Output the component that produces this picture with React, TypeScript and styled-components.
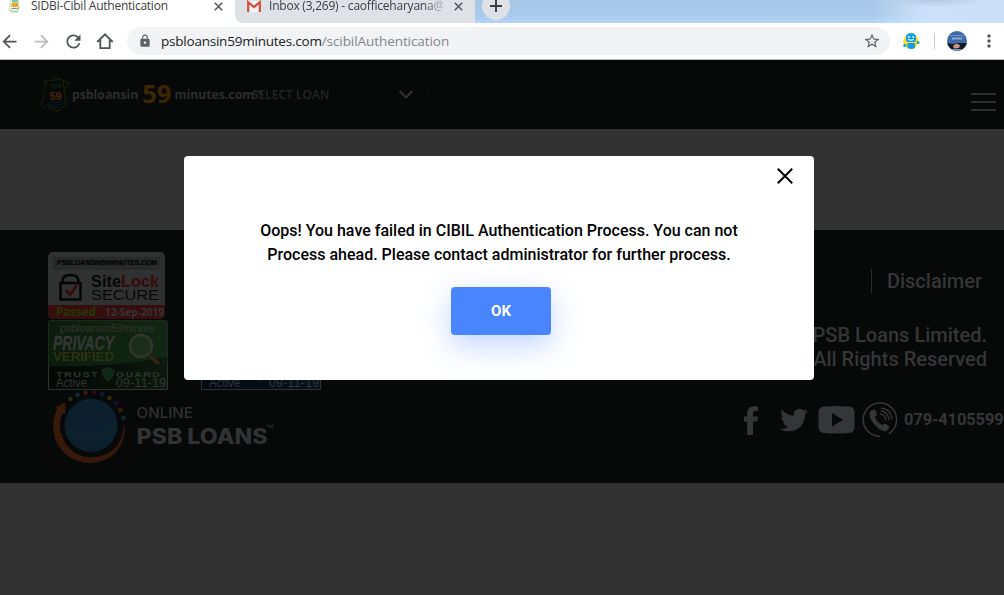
import React from "react";
import styled, { createGlobalStyle } from "styled-components";
import { MdArrowBack, MdArrowForward, MdRefresh, MdStarBorder, MdLock, MdMoreVert } from "react-icons/md";
import { FaTwitter } from "react-icons/fa";

const GlobalStyle = createGlobalStyle`
  * { box-sizing: border-box; }
  html, body { margin: 0; padding: 0; overflow: hidden; }
  svg { display: block; flex: none; }
`;

const Window = styled.div`
  position: relative;
  width: 1004px;
  height: 595px;
  overflow: hidden;
  background: #323232;
  font-family: Roboto, "Liberation Sans", sans-serif;
`;

/* ---------- browser chrome ---------- */

const TabStrip = styled.div`
  display: flex;
  height: 23px;
  background:
    radial-gradient(ellipse 50px 7px at 935px 0, rgba(176, 196, 222, 0.9) 0%, transparent 100%),
    linear-gradient(90deg, transparent 870px, rgba(210, 229, 252, 0.85) 925px, #cbdff6 100%),
    linear-gradient(#a6c7e6 0%, #a9c9e9 60%, #b2d4fb 100%);
`;

const Tab = styled.div<{ $active?: boolean; $width: number }>`
  display: flex;
  width: ${(p) => p.$width}px;
  height: 23px;
  padding-left: ${(p) => (p.$active ? 7 : 12)}px;
  background: ${(p) => (p.$active ? "#fff" : "#dee1e6")};
  border-radius: ${(p) => (p.$active ? "0" : "0 0 0 8px")};
`;

const TabsBase = styled.div`
  display: flex;
  width: 475px;
  height: 23px;
  background: #fff;
`;

const TabTitle = styled.div<{ $width: number; $faded?: boolean; $spacing: number }>`
  width: ${(p) => p.$width}px;
  margin-left: ${(p) => (p.$faded ? 8 : 9)}px;
  height: 16px;
  margin-top: -2px;
  line-height: 16px;
  font-family: "Open Sans", "Noto Sans", sans-serif;
  font-size: 12px;
  letter-spacing: ${(p) => p.$spacing}px;
  white-space: nowrap;
  overflow: hidden;
  color: #3c4043;
  ${(p) => p.$faded && "mask-image: linear-gradient(90deg, #000 88%, rgba(0,0,0,.25));"}
`;

const NewTab = styled.div`
  width: 28px;
  height: 28px;
  margin: -8px 0 0 7px;
  border-radius: 50%;
  background: #dee1e6;
  display: flex;
  align-items: center;
  justify-content: center;
`;

const Toolbar = styled.div`
  display: flex;
  align-items: center;
  height: 37px;
  padding-left: 0;
  background: #fff;
  border-bottom: 1px solid #b4b4b6;
`;

const NavButtons = styled.div`
  display: flex;
  margin-left: -7px;
`;

const NavButton = styled.div<{ $dim?: boolean }>`
  display: flex;
  align-items: center;
  justify-content: center;
  width: 32px;
  color: ${(p) => (p.$dim ? "#babcbe" : "#505357")};
`;

const AddressBar = styled.div`
  display: flex;
  align-items: center;
  width: 763px;
  height: 28px;
  margin-left: 6px;
  padding: 0 9px 0 11px;
  border-radius: 14px;
  background: #f1f3f4;
  color: #5f6368;
`;

const Url = styled.div`
  flex: 1;
  margin-left: 9px;
  font-family: "Open Sans", "Noto Sans", sans-serif;
  font-size: 13.5px;
  letter-spacing: -0.22px;
  white-space: nowrap;
  color: #202124;
  span { color: #80868b; letter-spacing: -0.07px; }
`;

const Extensions = styled.div`
  display: flex;
  align-items: center;
  margin-left: 12px;
  color: #505357;
`;

const Divider = styled.div`
  width: 1px;
  height: 16px;
  margin: 0 12px 0 14px;
  background: #c8cacd;
`;

const MoreMenu = styled.div`
  margin-left: 12px;
`;

/* ---------- page ---------- */

const Header = styled.header`
  display: flex;
  align-items: center;
  height: 69px;
  padding: 0 8px 0 40px;
  background: #060908;
`;

const Brand = styled.div`
  display: flex;
  align-items: center;
  width: 182px;
  height: 26px;
  padding-left: 2px;
  white-space: nowrap;
  font-family: "Open Sans", "Noto Sans", sans-serif;
  font-weight: 700;
  font-size: 12.3px;
  line-height: 26px;
  letter-spacing: -0.03px;
  color: #2c2d2e;
`;

const BrandNumber = styled.span`
  margin: -3px 3px 0 4px;
  font-size: 25.5px;
  line-height: 26px;
  letter-spacing: 0;
  color: #3f2603;
`;

const Trademark = styled.span`
  align-self: flex-start;
  margin-top: 6px;
  font-size: 11px;
  line-height: 12px;
`;

const LoanSelect = styled.div`
  display: flex;
  align-items: center;
  justify-content: space-between;
  width: 177px;
  height: 16px;
  padding-right: 15px;
  border-right: 1px solid #0b0e0d;
  white-space: nowrap;
  font-family: "Open Sans", "Noto Sans", sans-serif;
  font-weight: 600;
  font-size: 12px;
  color: #242526;
`;

const MenuButton = styled.div`
  display: flex;
  flex-direction: column;
  gap: 6px;
  width: 25px;
  margin: 15px 0 0 auto;
  i { height: 2px; background: #2e302f; }
`;

const Spacer = styled.div`
  height: 101px;
`;

const Footer = styled.footer`
  display: flex;
  justify-content: space-between;
  height: 253px;
  background: #060908;
`;

const FooterLeft = styled.div`
  padding: 22px 0 0 48px;
`;

const BadgeRow = styled.div`
  display: flex;
  gap: 33px;
  margin-top: 1px;
`;

const OnlineLogo = styled.div`
  display: flex;
  margin: 0 0 0 3px;
`;

const FooterRight = styled.div`
  display: flex;
  flex-direction: column;
  align-items: flex-end;
  width: 300px;
  font-size: 20px;
  font-weight: 500;
  line-height: 24px;
  color: #353637;
`;

const Disclaimer = styled.div`
  margin: 39px 22px 0 0;
  padding-left: 15px;
  border-left: 1px solid #2a2c2c;
`;

const Copyright = styled.div`
  margin: 30px 17px 0 0;
  text-align: right;
`;

const Contact = styled.div`
  display: flex;
  align-items: center;
  width: 264px;
  height: 36px;
  margin-top: 31px;
  overflow: hidden;
  font-size: 16.5px;
  font-weight: 700;
  white-space: nowrap;
  color: #353637;
`;

const Phone = styled.span`
  margin-left: 6px;
  letter-spacing: -0.15px;
`;

/* ---------- dialog ---------- */

const Dialog = styled.div`
  position: absolute;
  left: 184px;
  top: 156px;
  width: 630px;
  height: 224px;
  display: flex;
  flex-direction: column;
  align-items: center;
  background: #fff;
  border-radius: 4px;
`;

const CloseButton = styled.div`
  align-self: flex-end;
  margin: 12px 21px 0 0;
`;

const Message = styled.p`
  width: 500px;
  margin: 35px 0 0;
  text-align: center;
  font-size: 16px;
  font-weight: 500;
  line-height: 24px;
  color: #000;
`;

const OkButton = styled.button`
  width: 100px;
  height: 48px;
  margin: 20px 0 0 4px;
  padding: 0 0 1px;
  border: 0;
  border-radius: 4px;
  background: #4885ff;
  box-shadow: 0 10px 30px rgba(72, 133, 255, 0.35);
  font-family: Roboto, sans-serif;
  font-size: 15px;
  font-weight: 700;
  color: #fff;
`;

const CloseX = ({ size, color, width }: { size: number; color: string; width: number }) => (
  <svg width={size} height={size} viewBox={`0 0 ${size} ${size}`} stroke={color} strokeWidth={width}>
    <path d={`M.8 .8L${size - 0.8} ${size - 0.8}M${size - 0.8} .8L.8 ${size - 0.8}`} />
  </svg>
);

const TabX = styled.div`
  margin: 1.5px 0 0 auto;
  padding-right: 12px;
`;

const SiteIcon = () => (
  <svg width="15" height="15" viewBox="0 0 15 15">
    <path d="M4 -1l8 1.500L11 10l-5 3-4.500-3 1-2z" fill="#f3f8ea" stroke="#b9d8a2" strokeWidth=".8" />
    <path d="M3 10l7 2.500 2.500-6" fill="none" stroke="#8cc46c" strokeWidth=".8" />
    <rect x="5" y="0" width="6" height="2.500" fill="#7fc8a0" />
    <rect x="4.500" y="3" width="6.500" height="4" fill="#f1a52b" />
    <path d="M4.500 8.500h6" stroke="#6a91cc" />
  </svg>
);

const GmailIcon = () => (
  <svg width="14" height="14" viewBox="0 0 14 14">
    <rect x="1" y="1" width="12" height="11" fill="#f3f3f3" />
    <path d="M1.200 12V2.200L7 7l5.800-4.800V12" fill="none" stroke="#d54b3d" strokeWidth="2.200" />
  </svg>
);

const HomeIcon = () => (
  <svg width="18" height="18" viewBox="0 0 18 18" fill="none" stroke="currentColor" strokeWidth="1.800">
    <path d="M1.300 10L9 2.300 16.700 10M4.300 8v8.100h9.400V8" />
  </svg>
);

const RobotIcon = () => (
  <svg width="18" height="18" viewBox="0 0 18 18">
    <circle cx="9" cy="9.500" r="7.600" fill="#ffe11a" />
    <rect x="6" y="1" width="6" height="3" rx="1" fill="#3cc66a" />
    <rect x="4" y="2" width="10" height="8" rx="2.500" fill="#119cf2" />
    <path d="M5.500 11h7.500v5q-3.750 2-7.500 0z" fill="#119cf2" />
    <circle cx="2.800" cy="13.300" r="1.600" fill="#119cf2" />
    <circle cx="16" cy="10.500" r="1.500" fill="#119cf2" />
    <path d="M6 5h1.800M10.400 5h1.800M6.300 7.200q2.700 2 5.400 0" stroke="#fff" strokeWidth="1.300" fill="none" />
  </svg>
);

const Avatar = () => (
  <svg width="20" height="20" viewBox="0 0 20 20">
    <defs><clipPath id="avatar"><circle cx="10" cy="10" r="10" /></clipPath></defs>
    <g clipPath="url(#avatar)">
      <rect width="20" height="20" fill="#3f6ba8" />
      <path d="M3 4.500h14" stroke="#7fa0cb" strokeWidth="1.200" strokeDasharray="2 .6" />
      <path d="M5 7.500h10" stroke="#a9bfd9" strokeWidth="2" strokeDasharray="1.500 .6" />
      <path d="M0 12l6 1 4-1 10 0v8H0z" fill="#161a25" />
      <path d="M6 15l3-2.500 4 1.500-1 3-5 .5z" fill="#c99882" />
      <path d="M5 18h9v2H5z" fill="#6aa2d8" />
    </g>
  </svg>
);

const BrandMark = () => (
  <svg width="30" height="36" viewBox="0 0 30 36">
    <g fill="none" stroke="#14230d">
      <path d="M11 4l3-3.500 15 5-4 6M4 4l18-1.500M5 31L1 27l4-9M4 4l2 6M8 30l10 4 5-4M26 28l-4 3M23 3l3 25M6 28l12 2.500" />
      <path d="M2 11l2 2-3 2 3 2M27 18l-2 3 3 2-3 2" strokeDasharray="1 1" />
    </g>
    <path d="M8 24h15v4H9z" fill="#080b1c" />
    <text x="16" y="11" fill="#08240f" fontSize="5.500" fontWeight="700" textAnchor="middle" fontFamily="Open Sans">PSB</text>
    <text x="15.500" y="23" fill="#482607" fontSize="11" fontWeight="700" textAnchor="middle" fontFamily="Liberation Sans">59</text>
  </svg>
);

const SiteLockBadge = () => (
  <svg width="117" height="67" viewBox="0 0 117 67" fontFamily="Liberation Sans">
    <defs><clipPath id="lockBadge"><rect width="117" height="67" rx="5" /></clipPath></defs>
    <g clipPath="url(#lockBadge)">
      <rect width="117" height="67" fill="#303131" />
      <rect x="5" y="5" width="107" height="13" fill="#282929" />
      <rect y="53" width="117" height="14" fill="#350e0d" />
    </g>
    <text x="9" y="13.300" fontSize="6.500" fontWeight="700" fill="#040404" stroke="#040404" strokeWidth=".2" textLength="100" lengthAdjust="spacingAndGlyphs">PSBLOANSIN59MINUTES.COM</text>
    <path d="M14.500 31v-2q0-6 8-6t8 6v2" fill="none" stroke="#050505" strokeWidth="2.500" />
    <rect x="12.500" y="31" width="20" height="16.500" fill="#303131" stroke="#050505" strokeWidth="2.500" />
    <path d="M18 38l4 5 7-10" fill="none" stroke="#3b0b0b" strokeWidth="2.800" />
    <text x="43" y="34.500" fontSize="17" fontWeight="700" fill="#060606" textLength="30" lengthAdjust="spacingAndGlyphs">Site</text>
    <text x="73" y="34.500" fontSize="17" fontWeight="700" fill="#350b0b" textLength="38" lengthAdjust="spacingAndGlyphs">Lock</text>
    <text x="43" y="48" fontSize="15" fill="#080808" textLength="68" lengthAdjust="spacingAndGlyphs">SECURE</text>
    <text x="8" y="64" fontSize="11.500" fontWeight="700" fill="#29350b" textLength="40" fontFamily="Open Sans" lengthAdjust="spacingAndGlyphs">Passed</text>
    <text x="57" y="64" fontSize="10.500" fontWeight="700" fill="#393433" textLength="59" fontFamily="Open Sans" lengthAdjust="spacingAndGlyphs">12-Sep-2019</text>
  </svg>
);

const TrustBadge = ({ blue }: { blue?: boolean }) => {
  const id = blue ? "trustBlue" : "trustGreen";
  return (
    <svg width="120" height="70" viewBox="0 0 120 70" fontFamily="Liberation Sans">
      <defs>
        <linearGradient id={id}>
          <stop offset="0" stopColor={blue ? "#080e18" : "#0a1c0b"} />
          <stop offset="1" stopColor={blue ? "#09203a" : "#122714"} />
        </linearGradient>
        <linearGradient id={`${id}Base`}>
          <stop offset=".2" stopColor={blue ? "#040a13" : "#050906"} />
          <stop offset="1" stopColor={blue ? "#06131f" : "#0c1a0e"} />
        </linearGradient>
      </defs>
      <rect x=".5" y=".5" width="119" height="69" rx="2" fill={`url(#${id})`} stroke="#1d291f" />
      <path d="M1 46q60 2 118-9v32H1z" fill={`url(#${id}Base)`} />
      <path d="M.5 46v23.500h119V46" fill="none" stroke="#2f3233" />
      <text x="12" y="12" fontSize="11" fill="#30352f" textLength="95">psbloansin59minute</text>
      <text x="5" y="29.500" fontSize="20" fontWeight="700" fontStyle="italic" fill="#343634" stroke="#343634" strokeWidth=".5" textLength="61" lengthAdjust="spacingAndGlyphs">PRIVACY</text>
      <text x="5" y="41" fontSize="12.500" fontWeight="700" fill="#2c3315" textLength="61" lengthAdjust="spacingAndGlyphs">VERIFIED</text>
      <circle cx="93" cy="26" r="11" fill="#1a2e1a" stroke="#303530" strokeWidth="2.500" />
      <path d="M102 36l9 8" stroke="#3a2411" strokeWidth="3.500" />
      <text x="8" y="57" fontSize="8" fontWeight="700" letterSpacing="1" fill="#2d332e" textLength="43" lengthAdjust="spacingAndGlyphs">TRUST</text>
      <path d="M54 50l6-2 6 2q0 7-6 11-6-4-6-11z" fill="#0a2815" stroke="#222b25" />
      <text x="68" y="57" fontSize="8" fontWeight="700" letterSpacing="1" fill="#2d332e" textLength="45" lengthAdjust="spacingAndGlyphs">GUARD</text>
      <text x="8" y="67" fontSize="12" fill="#323634" textLength="31" lengthAdjust="spacingAndGlyphs">Active</text>
      <text x="68" y="67" fontSize="12" fill="#323634" textLength="50">09-11-19</text>
    </svg>
  );
};

const PsbLogo = () => (
  <svg width="226" height="76" viewBox="0 0 226 76">
    <defs>
      <linearGradient id="globe" x2="0" y2="1"><stop stopColor="#0c2231" /><stop offset="1" stopColor="#0c1e2b" /></linearGradient>
    </defs>
    <circle cx="40" cy="35.500" r="26.500" fill="url(#globe)" />
    <path d="M14 34q17 10 52-4-3-14-14-19Q34 3 20 18q-6 7-6 16z" fill="#0b1b28" opacity=".5" />
    <path d="M18 20q14 20 46 13" fill="none" stroke="#0d2536" />
    <path d="M3.500 18L14.500 12V24.500l-3-1Q6 36 12 48.500 21 67 40 67.500 70 66 73 36h1.300Q73 70 40 73 15 73 4.500 50-1 35 6 19z" fill="#37190b" />
    <circle cx="19.500" cy="9" r="2.300" fill="#27300f" /><circle cx="26.500" cy="5" r="2.300" fill="#0b2b38" />
    <circle cx="34.500" cy="2.700" r="2.300" fill="#391a0c" /><circle cx="43" cy="2.500" r="2.300" fill="#2b0918" />
    <circle cx="51" cy="4.200" r="2.300" fill="#0c1d34" /><circle cx="58.500" cy="8" r="2.300" fill="#382908" />
    <circle cx="65" cy="13.300" r="2.300" fill="#1d0d2a" /><circle cx="69.500" cy="20" r="2.300" fill="#391a0c" />
    <circle cx="72.500" cy="28" r="2.300" fill="#0b2933" />
    <text x="85.500" y="28" fontFamily="Inter" fontWeight="500" fontSize="15" fill="#2f3031" textLength="56.500" lengthAdjust="spacingAndGlyphs">ONLINE</text>
    <text x="85.500" y="54" fontFamily="Inter" fontWeight="800" fontSize="21.500" fill="#313233" textLength="131" lengthAdjust="spacingAndGlyphs">PSB LOANS</text>
    <text x="215" y="41" fontFamily="Open Sans" fontSize="9" fill="#2e2f30" textLength="8" lengthAdjust="spacingAndGlyphs">™</text>
  </svg>
);

const FacebookSvg = styled.svg`
  margin-left: 4px;
`;
const TwitterIcon = styled(FaTwitter)`
  width: 28px;
  height: 28px;
  margin-left: 22px;
`;
const YoutubeIcon = () => (
  <svg width="47" height="36" viewBox="0 0 47 36">
    <path fillRule="evenodd" fill="currentColor" d="M16 4.500Q28.500 3.500 41 4.500q5.500.5 5.500 6v14.500q0 5.500-5.500 6-12.500 1-25 0-5.500-.5-5.500-6V10.500q0-5.500 5.500-6zM24 11v13.500L35 17.700z" />
  </svg>
);
const PhoneIcon = styled.svg`
  margin-left: 7px;
`;

export default function App() {
  return (
    <Window>
      <GlobalStyle />
      <TabStrip>
        <TabsBase>
          <Tab $active $width={235}>
            <SiteIcon />
            <TabTitle $width={160} $spacing={-0.24}>SIDBI-Cibil Authentication</TabTitle>
            <TabX><CloseX size={9} color="#55585c" width={1.6} /></TabX>
          </Tab>
          <Tab $width={240}>
            <GmailIcon />
            <TabTitle $width={174} $spacing={-0.22} $faded>Inbox (3,269) - caofficeharyana@</TabTitle>
            <TabX><CloseX size={9} color="#55585c" width={1.6} /></TabX>
          </Tab>
        </TabsBase>
        <NewTab>
          <svg width="14" height="14" viewBox="0 0 14 14" stroke="#3c4043" strokeWidth="2"><path d="M7 1v12M1 7h12" /></svg>
        </NewTab>
      </TabStrip>
      <Toolbar>
        <NavButtons>
          <NavButton><MdArrowBack size={21} /></NavButton>
          <NavButton $dim><MdArrowForward size={21} /></NavButton>
          <NavButton><MdRefresh size={21} /></NavButton>
          <NavButton><HomeIcon /></NavButton>
        </NavButtons>
        <AddressBar>
          <MdLock size={14} />
          <Url>psbloansin59minutes.com<span>/scibilAuthentication</span></Url>
          <MdStarBorder size={18} />
        </AddressBar>
        <Extensions>
          <RobotIcon />
          <Divider />
          <Avatar />
          <MoreMenu><MdMoreVert size={20} /></MoreMenu>
        </Extensions>
      </Toolbar>
      <Header>
        <BrandMark />
        <Brand>psbloansin<BrandNumber>59</BrandNumber>minutes.com<Trademark>™</Trademark></Brand>
        <LoanSelect>
          SELECT LOAN
          <svg width="14" height="9" viewBox="0 0 14 9" fill="none" stroke="#343635" strokeWidth="1.900"><path d="M.7 1L7 7.500 13.300 1" /></svg>
        </LoanSelect>
        <MenuButton><i /><i /><i /></MenuButton>
      </Header>
      <Spacer />
      <Footer>
        <FooterLeft>
          <SiteLockBadge />
          <BadgeRow><TrustBadge /><TrustBadge blue /></BadgeRow>
          <OnlineLogo><PsbLogo /></OnlineLogo>
        </FooterLeft>
        <FooterRight>
          <Disclaimer>Disclaimer</Disclaimer>
          <Copyright>PSB Loans Limited.<br />All Rights Reserved</Copyright>
          <Contact>
            <FacebookSvg width="14" height="29" viewBox="0 0 14 29" fill="currentColor">
              <path d="M14 .2V5h-2.800Q9 5 9 7.200v3.300h5L13.400 15.500H9V29H3.200V15.500H0v-5h3.200V7Q3.200.2 10 .2z" />
            </FacebookSvg>
            <TwitterIcon />
            <YoutubeIcon />
            <PhoneIcon width="36" height="36" viewBox="0 0 36 36" fill="none" stroke="currentColor">
              <path d="M18.500 34.300A16.700 16.700 0 1 1 27 31.600" strokeWidth="1.600" />
              <path d="M8.500 9l3.500-1.500q1.500 0 2 2l.7 3q0 1.500-2 2.500 2 5 7.500 8.300 1.500-2 3-1.500l3.300 2q1.300 1.200.3 2.700l-2.300 2.600q-4 1-9-3.600Q7 18 7.500 11z" fill="currentColor" stroke="none" />
              <path d="M18 12q5 .5 6 6.500M18.500 9q7.500 1 8.500 9M19 6q10 1 11 11.500" strokeWidth="1.400" />
            </PhoneIcon>
            <Phone>079-41055999</Phone>
          </Contact>
        </FooterRight>
      </Footer>
      <Dialog role="dialog">
        <CloseButton><CloseX size={16} color="#000" width={2} /></CloseButton>
        <Message>Oops! You have failed in CIBIL Authentication Process. You can not Process ahead. Please contact administrator for further process.</Message>
        <OkButton>OK</OkButton>
      </Dialog>
    </Window>
  );
}
